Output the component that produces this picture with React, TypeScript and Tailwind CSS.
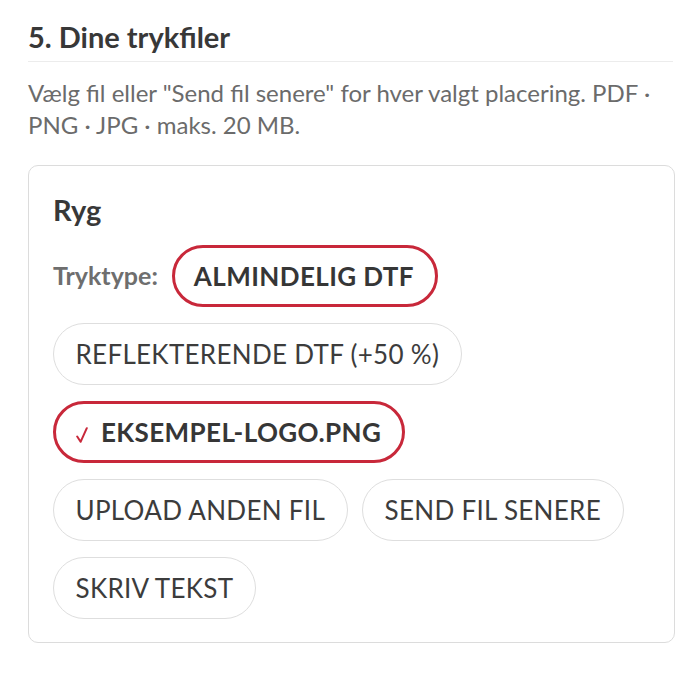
import React from "react";

function Pill({
  children,
  selected = false,
}: {
  children: React.ReactNode;
  selected?: boolean;
}) {
  return (
    <div
      className={
        selected
          ? "flex h-[62px] items-center rounded-full border-[3px] border-[#c8283a] bg-white pl-[19px] pr-[21px] text-[26px] font-bold uppercase tracking-[0.4px] text-[#363636]"
          : "flex h-[62px] items-center rounded-full border-[1.5px] border-[#dedede] bg-white pl-[21.5px] pr-[22px] text-[26px] font-normal uppercase tracking-[0.3px] text-[#3c3c3c]"
      }
    >
      {children}
    </div>
  );
}

export default function App() {
  return (
    <div
      className="min-h-[673px] w-full bg-white pl-[28px] pr-[10px] pt-[19px] pb-[31px]"
      style={{ fontFamily: "Lato, 'Noto Sans', sans-serif" }}
    >
      <h2 className="mr-[2px] border-b border-[#ececec] pb-[6px] text-[29px] leading-[36px] font-bold text-[#383838]">
        5. Dine trykfiler
      </h2>
      <p className="mt-[15px] text-[24px] leading-[32px] text-[#6b6b6b]">
        Vælg fil eller "Send fil senere" for hver valgt placering. PDF · PNG · JPG · maks. 20 MB.
      </p>
      <div className="mt-[24px] rounded-[10px] border border-[#dcdcdc] px-[24px] pt-[26px] pb-[23px]">
        <h3 className="text-[29px] leading-[36px] font-bold text-[#383838]">Ryg</h3>
        <div className="mt-[17px] flex flex-wrap items-center gap-x-[14px] gap-y-[16px]">
          <span className="text-[25px] font-bold text-[#6e6e6e]">Tryktype:</span>
          <Pill selected>Almindelig DTF</Pill>
          <Pill>Reflekterende DTF (+50 %)</Pill>
        </div>
        <div className="mt-[16px] flex flex-wrap items-center gap-x-[14px] gap-y-[16px]">
          <Pill selected>
            <svg
              width="12"
              height="16"
              viewBox="0 0 12 16"
              className="mt-[5px] mr-[13px] ml-[1px] shrink-0"
              fill="none"
            >
              <path
                d="M1.2 9.5 L4.6 14.8 L10.8 1.2"
                stroke="#c8283a"
                strokeWidth="2"
                strokeLinecap="round"
                strokeLinejoin="round"
              />
            </svg>
            eksempel-logo.png
          </Pill>
          <Pill>Upload anden fil</Pill>
          <Pill>Send fil senere</Pill>
          <Pill>Skriv tekst</Pill>
        </div>
      </div>
    </div>
  );
}
